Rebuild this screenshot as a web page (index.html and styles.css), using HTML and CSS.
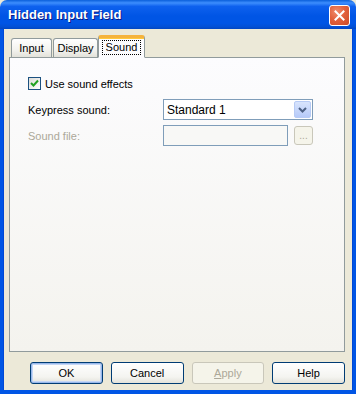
FILE: index.html
```html
<!DOCTYPE html>
<html lang="en">
<head>
  <meta charset="UTF-8">
  <title>Hidden Input Field</title>
  <link rel="stylesheet" href="styles.css">
</head>
<body>
  <div class="window">
    <!-- Title bar -->
    <div class="titlebar">
      <span class="title">Hidden Input Field</span>
      <button type="button" class="close" aria-label="Close">
        <svg width="11" height="11" viewBox="0 0 11 11">
          <path d="M1.5 1.5 L9.5 9.5 M9.5 1.5 L1.5 9.5" stroke="#fff" stroke-width="2" stroke-linecap="square"/>
        </svg>
      </button>
    </div>

    <div class="frame">
      <!-- Tabs -->
      <div class="tabs">
        <div class="tab tab-input">Input</div>
        <div class="tab tab-display">Display</div>
        <div class="tab tab-sound active"><span class="focus">Sound</span></div>
      </div>

      <!-- Sound page -->
      <div class="panel">
        <label class="check-row">
          <span class="checkbox">
            <svg width="9" height="9" viewBox="0 0 9 9">
              <path d="M1 4 L3.5 6.5 L8 1.5" fill="none" stroke="#21A121" stroke-width="2"/>
            </svg>
          </span>
          Use sound effects
        </label>

        <div class="form-grid">
          <span class="label">Keypress sound:</span>
          <div class="select">
            <span class="select-text">Standard 1</span>
            <span class="select-btn">
              <svg width="9" height="6" viewBox="0 0 9 6">
                <path d="M1 1 L4.5 4.5 L8 1" fill="none" stroke="#4D6185" stroke-width="2"/>
              </svg>
            </span>
          </div>

          <span class="label disabled">Sound file:</span>
          <div class="file-row">
            <div class="textbox"></div>
            <span class="browse">...</span>
          </div>
        </div>
      </div>

      <!-- Buttons -->
      <div class="buttons">
        <button type="button" class="btn default">OK</button>
        <button type="button" class="btn">Cancel</button>
        <button type="button" class="btn" disabled><u>A</u>pply</button>
        <button type="button" class="btn">Help</button>
      </div>
    </div>
  </div>
</body>
</html>
```

FILE: styles.css
```css
body {
  margin: 0;
  font-family: Tahoma, "Liberation Sans", "DejaVu Sans", sans-serif;
  font-size: 11px;
  color: #000;
  background: #ECE9D8;
}
.window {
  width: 356px;
  height: 394px;
  display: flex;
  flex-direction: column;
}
.titlebar {
  height: 29px;
  display: flex;
  align-items: center;
  justify-content: space-between;
  padding: 0 6px 0 8px;
  box-sizing: border-box;
  border-radius: 7px 7px 0 0;
  background: linear-gradient(to bottom, #0A5FDB 0%, #3D8EFD 10%, #0E61EE 22%, #0055E5 55%, #0055E5 80%, #0250D6 92%, #0146C2 100%);
}
.title {
  color: #fff;
  font-family: "Liberation Sans", sans-serif;
  font-weight: bold;
  font-size: 13px;
  text-shadow: 1px 1px 0 #0A1883;
}
.close {
  width: 21px;
  height: 21px;
  margin-top: 1px;
  padding: 0;
  border: 1px solid #fff;
  border-radius: 3px;
  background: radial-gradient(circle at 35% 30%, #F08D6E 0%, #E2613D 45%, #CC4B26 100%);
  display: flex;
  align-items: center;
  justify-content: center;
}
.frame {
  flex: 1;
  display: flex;
  flex-direction: column;
  background: #ECE9D8;
  border-left: 3px solid #0055E5;
  border-right: 3px solid #0055E5;
  border-bottom: 4px solid #0055E5;
  box-shadow: inset 1px 0 0 #0048D6, inset -1px 0 0 #0048D6;
  padding: 5px 8px 0 6px;
}
.tabs {
  display: flex;
  align-items: flex-end;
  padding-left: 2px;
  height: 23px;
  position: relative;
  z-index: 1;
}
.tab {
  height: 19px;
  margin-right: 1px;
  display: flex;
  align-items: center;
  justify-content: center;
  border: 1px solid #919B9C;
  border-bottom: none;
  border-radius: 3px 3px 0 0;
  background: linear-gradient(to bottom, #FFFFFF, #F3F3EF 60%, #E3E2DA);
  box-sizing: border-box;
}
.tab-input {
  width: 41px;
}
.tab-display {
  width: 45px;
}
.tab-sound {
  width: 47px;
}
.tab.active {
  height: 23px;
  margin-left: -1px;
  background: #FCFCFE;
  border-top: 3px solid #F5B33D;
  border-bottom: 1px solid #FCFCFE;
  margin-bottom: -1px;
  box-shadow: inset 0 1px 0 #FFC83C;
}
.focus {
  outline: 1px dotted #000;
  padding: 0 3px;
  line-height: 13px;
}
.panel {
  height: 295px;
  box-sizing: border-box;
  border: 1px solid #919B9C;
  background: linear-gradient(to bottom, #FCFCFE, #F4F3EE);
  padding: 19px 18px;
}
.check-row {
  display: flex;
  align-items: center;
  gap: 4px;
  height: 13px;
}
.checkbox {
  width: 13px;
  height: 13px;
  box-sizing: border-box;
  border: 1px solid #1C5180;
  background: linear-gradient(135deg, #DCDCD7, #FFFFFF);
  display: flex;
  align-items: center;
  justify-content: center;
}
.form-grid {
  display: grid;
  grid-template-columns: 135px 150px;
  row-gap: 5px;
  align-items: center;
  margin-top: 9px;
}
.label.disabled {
  color: #ACA899;
}
.select {
  height: 21px;
  box-sizing: border-box;
  border: 1px solid #7F9DB9;
  background: #fff;
  display: flex;
  align-items: center;
  justify-content: space-between;
  padding: 1px 1px 1px 3px;
}
.select-text {
  font-size: 12px;
}
.select-btn {
  width: 17px;
  height: 17px;
  box-sizing: border-box;
  border: 1px solid #B7CBF5;
  border-radius: 2px;
  background: linear-gradient(to bottom, #D8E4FC, #B6CAF9);
  display: flex;
  align-items: center;
  justify-content: center;
}
.file-row {
  display: flex;
  align-items: center;
  gap: 6px;
}
.textbox {
  width: 125px;
  height: 21px;
  box-sizing: border-box;
  border: 1px solid #7F9DB9;
  background: #F8F8F6;
}
.browse {
  width: 19px;
  height: 19px;
  box-sizing: border-box;
  border: 1px solid #C9C7BA;
  border-radius: 3px;
  background: #F5F4EA;
  color: #ACA899;
  font-size: 10px;
  display: flex;
  align-items: flex-end;
  justify-content: center;
  padding-bottom: 3px;
}
.buttons {
  display: flex;
  gap: 8px;
  padding: 10px 0 0 21px;
}
.btn {
  width: 73px;
  height: 22px;
  padding: 0;
  font: inherit;
  color: #000;
  border: 1px solid #003C74;
  border-radius: 3px;
  background: linear-gradient(to bottom, #FFFFFF, #F4F4F0 70%, #E3E2DA);
}
.btn.default {
  box-shadow: inset 0 0 0 1px #98B8EA, inset 0 0 0 2px #C4D6F5;
}
.btn:disabled {
  color: #ACA899;
  border-color: #C9C7BA;
  background: #F5F4EA;
}
```
